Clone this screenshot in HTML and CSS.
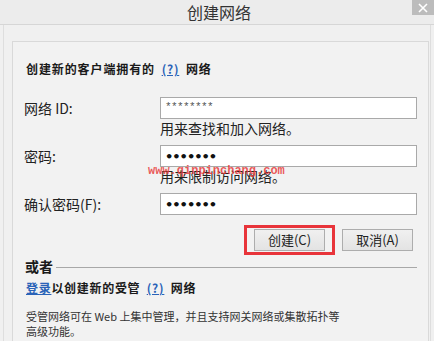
FILE: index.html
```html
<!DOCTYPE html>
<html lang="zh-CN">
<head>
<meta charset="utf-8">
<title>创建网络</title>
<link rel="stylesheet" href="styles.css">
</head>
<body>
<div class="window">
  <div class="titlebar">
    <span class="title">创建网络</span>
    <span class="close"><svg width="10" height="10" viewBox="0 0 10 10"><path d="M1 1 L9 9 M9 1 L1 9" stroke="#fff" stroke-width="1.6"/></svg></span>
  </div>
  <div class="frame">
    <div class="panel">
      <p class="heading">创建新的客户端拥有的 <a class="help">(?)</a> 网络</p>
      <div class="form">
        <label class="lbl">网络 ID:</label>
        <div class="input"><span class="stars">********</span></div>
        <span></span>
        <div class="hint">用来查找和加入网络。</div>
        <label class="lbl">密码:</label>
        <div class="input"><span class="dots">•••••••</span></div>
        <span></span>
        <div class="hint">用来限制访问网络。</div>
        <label class="lbl">确认密码(F):</label>
        <div class="input"><span class="dots">•••••••</span></div>
      </div>
      <div class="actions">
        <span class="mark"><button class="btn">创建(C)</button></span>
        <button class="btn">取消(A)</button>
      </div>
      <div class="or"><span class="or-text">或者</span><span class="rule"></span></div>
      <p class="managed"><a class="link">登录</a>以创建新的受管 <a class="help">(?)</a> 网络</p>
      <p class="desc">受管网络可在 Web 上集中管理，并且支持网关网络或集散拓扑等<br>高级功能。</p>
    </div>
  </div>
  <div class="watermark">www.qinpinchang.com</div>
</div>
</body>
</html>
```
FILE: styles.css
```css
* { box-sizing: border-box; }
html, body { margin: 0; padding: 0; }
body {
  width: 434px;
  height: 341px;
  overflow: hidden;
  background: #f0f0f0;
  font-family: "Noto Sans CJK SC", "Noto Sans", sans-serif;
  color: #1a1a1a;
}
.window { position: relative; height: 341px; }
.titlebar {
  height: 25px;
  border-bottom: 1px solid #d6d6d6;
  background: #ececec;
  display: flex;
  justify-content: center;
  align-items: center;
}
.title { font-size: 16px; line-height: 24px; color: #333; margin-left: 4px; }
.close {
  position: absolute;
  top: 0;
  right: 0;
  width: 22px;
  height: 15px;
  background: #bcbcbc;
  display: flex;
  align-items: center;
  justify-content: center;
}
.frame {
  margin: 0 3px;
  height: 316px;
  border-left: 1px solid #dedede;
  border-right: 1px solid #dedede;
  padding: 16px 1px 0 8px;
}
.panel {
  height: 300px;
  border: 1px solid #d9d9d9;
  border-bottom: none;
  background: #f2f2f2;
  padding: 19px 11px 0 11px;
}
.heading {
  margin: 0;
  padding-left: 2px;
  font-size: 12px;
  line-height: 16px;
  font-weight: bold;
  letter-spacing: 0.9px;
}
.help {
  color: #2a63b8;
  text-decoration: underline;
  font-weight: bold;
  letter-spacing: 0.8px;
  margin: 0 3px;
}
.form {
  margin-top: 20px;
  display: grid;
  grid-template-columns: 136px 257px;
}
.lbl {
  font-size: 14px;
  line-height: 22px;
  height: 22px;
  color: #222;
}
.input {
  height: 22px;
  border: 1px solid #a9a9a9;
  background: #fff;
  padding-left: 4px;
  display: flex;
  align-items: center;
}
.stars { font-family: "Liberation Mono", monospace; font-size: 11px; color: #555; letter-spacing: -0.6px; margin-top: -3px; }
.dots { font-family: "DejaVu Sans", sans-serif; font-size: 13px; font-weight: bold; color: #111; letter-spacing: -1px; }
.hint {
  font-size: 14px;
  line-height: 18px;
  height: 26px;
  padding-top: 0;
  color: #222;
}
.actions {
  margin-top: 10px;
  display: flex;
  justify-content: flex-end;
  align-items: center;
  padding-right: 4px;
}
.mark {
  border: 3px solid #e8343a;
  padding: 1px 7px;
  display: flex;
}
.btn {
  width: 71px;
  height: 22px;
  border: 1px solid #adadad;
  background: linear-gradient(#f0f0f0, #e3e3e3);
  font-family: "Noto Sans CJK SC", sans-serif;
  font-size: 13px;
  line-height: 18px;
  color: #222;
  padding: 0;
}
.actions > .btn { margin-left: 7px; }
.or {
  margin-top: 2px;
  display: flex;
  align-items: center;
  height: 18px;
}
.or-text { font-size: 14px; font-weight: bold; line-height: 18px; padding-left: 1px; }
.rule { flex: 1; height: 1px; background: #a8a8a8; margin-left: 3px; margin-top: 2px; }
.managed {
  margin: 5px 0 0 0;
  padding-left: 2px;
  font-size: 12px;
  line-height: 16px;
  font-weight: bold;
  letter-spacing: 0.7px;
}
.link { color: #2a63b8; text-decoration: underline; }
.desc {
  margin: 13px 0 0 0;
  padding-left: 2px;
  font-size: 11px;
  line-height: 15px;
  color: #333;
}
.watermark {
  position: absolute;
  left: 148px;
  top: 163px;
  font-family: "Liberation Mono", monospace;
  font-size: 12px;
  font-weight: bold;
  color: rgba(232, 60, 60, 0.85);
  line-height: 16px;
}
```
